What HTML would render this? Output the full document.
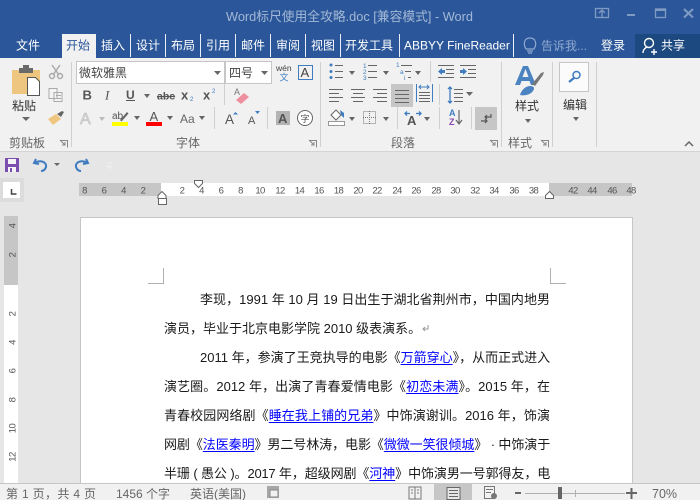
<!DOCTYPE html>
<html><head><meta charset="utf-8">
<style>
html,body{margin:0;padding:0;width:700px;height:500px;overflow:hidden;background:#e6e6e6}
svg{position:absolute;left:0;top:0}
svg text{font-family:"Liberation Sans","Noto Sans CJK SC",sans-serif}
.l{position:absolute;left:164px;width:386px;height:20px;line-height:20px;font-size:13px;color:#1a1a1a;white-space:nowrap;text-align:justify;text-align-last:justify;font-family:"Liberation Sans","Noto Sans CJK SC",sans-serif;overflow:visible}
.l a{color:#00f;text-decoration:underline;text-underline-offset:2px}
#doc{position:absolute;left:0;top:0;width:700px;height:483px;overflow:hidden}
</style></head><body>
<svg width="700" height="500" viewBox="0 0 700 500">
<rect width="700" height="500" fill="#e6e6e6"/>
<rect width="700" height="58" fill="#2b579a"/>
<rect y="58" width="700" height="93" fill="#f1f1f1"/>
<rect y="151" width="700" height="1" fill="#d4d4d4"/>
<!-- title -->
<text x="226" y="21" font-size="13" fill="#a3b8d6" textLength="247" lengthAdjust="spacingAndGlyphs">Word标尺使用全攻略.doc [兼容模式] - Word</text>
<g fill="none" stroke="#7f9bc3" stroke-width="1.300">
<rect x="595.500" y="8.500" width="13" height="9"/><path d="M599 13l3-3 3 3M602 10v7"/>
<path d="M627 15h8" stroke-width="2"/><rect x="655.500" y="9" width="10" height="8.500"/><path d="M655 10h11" stroke-width="2"/>
<path d="M684 9l9 8.500M693 9l-9 8.500" stroke-width="2"/></g>
<!-- tabs -->
<rect x="62" y="34" width="34" height="24" fill="#f1f1f1"/>
<rect x="635" y="34" width="65" height="24" fill="#1c4a80"/>
<g font-size="12" fill="#fff">
<text x="16" y="49.500">文件</text><text x="101" y="49.500">插入</text><text x="136" y="49.500">设计</text><text x="171" y="49.500">布局</text><text x="206" y="49.500">引用</text><text x="241" y="49.500">邮件</text><text x="276" y="49.500">审阅</text><text x="311" y="49.500">视图</text><text x="345" y="49.500">开发工具</text><text x="404" y="49.500">ABBYY FineReader</text><text x="601" y="49.500">登录</text><text x="661" y="49.500">共享</text>
</g>
<text x="66" y="49.500" font-size="12" fill="#2b579a">开始</text>
<text x="541" y="50" font-size="12" fill="#8fa9d0">告诉我...</text>
<g fill="#e8eef6"><rect x="130" y="34" width="1" height="23"/><rect x="165" y="34" width="1" height="23"/><rect x="200" y="34" width="1" height="23"/><rect x="235" y="34" width="1" height="23"/><rect x="270" y="34" width="1" height="23"/><rect x="305" y="34" width="1" height="23"/><rect x="340" y="34" width="1" height="23"/><rect x="399" y="34" width="1" height="23"/><rect x="513" y="34" width="1" height="23"/></g>
<path d="M526 49c-3-5-2-11 4-11s7 6 4 11zM527 51h6M528 53h4" fill="none" stroke="#8fa9d0" stroke-width="1.200"/>
<circle cx="649" cy="43" r="4.500" fill="none" stroke="#fff" stroke-width="1.400"/>
<path d="M643 53c0-3 2-5 4-6M651 52h6M654 49v6" fill="none" stroke="#fff" stroke-width="1.400"/>
<!-- ribbon separators -->
<g fill="#d0d0d0"><rect x="71" y="62" width="1" height="85"/><rect x="320" y="62" width="1" height="85"/><rect x="501" y="62" width="1" height="85"/><rect x="552" y="62" width="1" height="85"/><rect x="596" y="62" width="1" height="85"/><rect x="224" y="84" width="1" height="21"/><rect x="214" y="107" width="1" height="22"/><rect x="267" y="107" width="1" height="22"/><rect x="430" y="61" width="1" height="21"/><rect x="439" y="84" width="1" height="21"/><rect x="397" y="107" width="1" height="22"/><rect x="439" y="107" width="1" height="22"/><rect x="471" y="107" width="1" height="22"/></g>
<!-- clipboard -->
<path d="M12 70h28v24H12z" fill="#efc67f"/><rect x="19" y="68" width="14" height="5" fill="#6a6a6a"/><rect x="23" y="65" width="6" height="4" fill="#6a6a6a"/>
<path d="M27.500 77.500h8l4 4v14h-12z" fill="#fff" stroke="#555"/>
<text x="12" y="110" font-size="12" fill="#333">粘贴</text>
<path d="M22 117h8l-4 4z" fill="#666"/>
<!-- cut / copy / painter -->
<g fill="none" stroke="#aaa" stroke-width="1.500"><path d="M52 65l7 10M60 65l-7 10"/><circle cx="52" cy="76" r="2.500"/><circle cx="60" cy="76" r="2.500"/>
<path d="M49 88.500h8v10h-8zM54 92.500h8v9h-8zM56 95.500h5M56 98.500h5" stroke-width="1" fill="#f4f4f4"/></g>
<path d="M48 119l8-5 5 5-8 6z" fill="#efc67f"/><path d="M57 114l5-3 2 1-3 5z" fill="#666"/>
<text x="9" y="147" font-size="12" fill="#666">剪贴板</text>
<path d="M60.500 140.500h7v7M60 140l5 5M65 142v3h-3" fill="none" stroke="#888"/>
<!-- font boxes -->
<rect x="76.500" y="61.500" width="148" height="22" fill="#fff" stroke="#c6c6c6"/>
<rect x="225.500" y="61.500" width="46" height="22" fill="#fff" stroke="#c6c6c6"/>
<text x="79" y="77" font-size="12" fill="#444">微软雅黑</text>
<text x="229" y="77" font-size="12" fill="#444">四号</text>
<g fill="#666"><path d="M214 71h7l-3.500 4zM261 71h7l-3.500 4zM144 94h6l-3 4zM134 116h6l-3 4zM167 116h6l-3 4zM199 116h6l-3 4z"/></g>
<text x="276" y="71" font-size="8.500" fill="#444">wén</text><text x="279.500" y="80.500" font-size="9" fill="#3f7cc0">文</text>
<rect x="298.500" y="65.500" width="14" height="14" fill="none" stroke="#3f7cc0"/><text x="300.500" y="77" font-size="13" fill="#444">A</text>
<g fill="#555">
<text x="82.500" y="99.500" font-size="13" font-weight="bold">B</text><text x="105" y="99.500" font-size="13" font-style="italic" style="font-family:'Liberation Serif'">I</text>
<text x="126" y="99" font-size="12" font-weight="bold">U</text><rect x="126" y="100" width="9" height="1"/>
<text x="157" y="99.500" font-size="10.500" font-weight="bold" text-decoration="line-through">abc</text>
<text x="181" y="99.500" font-size="13" font-weight="bold">x</text><text x="203" y="99.500" font-size="13" font-weight="bold">x</text>
</g>
<text x="190" y="101" font-size="6" fill="#3f7cc0">2</text><text x="212" y="93" font-size="6" fill="#3f7cc0">2</text>
<text x="234" y="95" font-size="9" fill="#777">A</text><path d="M236 100l8-7 5 4-8 7z" fill="#ee8fa0"/>
<!-- font row3 -->
<text x="80" y="124" font-size="16" fill="#ddd" stroke="#bbb" stroke-width=".6">A</text><path d="M99 117h6l-3 4z" fill="#bbb"/>
<text x="112" y="119" font-size="10" fill="#555">ab</text><path d="M120 120l7-8 1.500 1.500-7 8z" fill="#666"/><rect x="112" y="122" width="16" height="4" fill="#ff0"/>
<text x="149.500" y="121" font-size="13" fill="#555">A</text><rect x="146" y="122" width="16" height="4" fill="#f00"/>
<text x="180" y="123" font-size="12" fill="#666">Aa</text>
<text x="225" y="124" font-size="13.500" fill="#555">A</text><path d="M233 114.500l2.500-2.500 2.500 2.500z" fill="#3f7cc0"/>
<text x="248" y="124" font-size="11" fill="#555">A</text><path d="M255 111h5l-2.500 3z" fill="#3f7cc0"/>
<rect x="276" y="111" width="14" height="14" fill="#b3b3b3"/><text x="278" y="123" font-size="13" font-weight="bold" fill="#555">A</text>
<circle cx="305" cy="118" r="7.500" fill="#fff" stroke="#666"/><text x="300.500" y="122" font-size="9" fill="#555">字</text>
<text x="176" y="147" font-size="12" fill="#666">字体</text>
<path d="M309.500 140.500h7v7M309 140l5 5M314 142v3h-3" fill="none" stroke="#888"/>
<!-- paragraph row1 -->
<g fill="#3f7cc0"><circle cx="331" cy="65" r="1.500"/><circle cx="331" cy="71.500" r="1.500"/><circle cx="331" cy="77.500" r="1.500"/></g>
<g stroke="#666" stroke-width="1" fill="none">
<path d="M335 65.500h8M335 71.500h8M335 77.500h8M368 65.500h9M368 71.500h9M368 77.500h9M401 65.500h11M405 71.500h6M408 77.500h3"/>
<path d="M438 65.500h16M446 69.500h8M446 73.500h8M438 77.500h16M460 65.500h16M468 69.500h8M468 73.500h8M460 77.500h16"/>
<path d="M329 89.500h14M329 93.500h10M329 97.500h14M329 101.500h10M351 89.500h14M353 93.500h10M351 97.500h14M353 101.500h10M373 89.500h14M377 93.500h10M373 97.500h14M377 101.500h10"/>
</g>
<g font-size="6.500" fill="#3f7cc0"><text x="363" y="68">1</text><text x="363" y="74">2</text><text x="363" y="80">3</text><text x="396" y="67">1</text><text x="400" y="74">a</text><text x="404" y="80">i</text></g>
<g fill="#3f7cc0"><path d="M438 71.500l4-3.500v2h3v3h-3v2zM467 71.500l-4-3.500v2h-3v3h3v2z"/></g>
<rect x="391" y="84" width="22" height="23" fill="#c6c6c6"/>
<g stroke="#666" fill="none"><path d="M395 90.500h14M395 94.500h14M395 98.500h14M395 102.500h14"/></g>
<path d="M416.500 84v18M432.500 84v18" stroke="#3f7cc0" fill="none"/>
<path d="M419 87h10M421 85l-2 2 2 2M427 85l2 2-2 2" stroke="#3f7cc0" fill="none"/>
<g stroke="#666" fill="none"><path d="M419 92.500h11M419 95.500h11M419 98.500h11M419 101.500h11"/></g>
<path d="M450 87v16M448 89l2-2 2 2M448 101l2 2 2-2" stroke="#3f7cc0" fill="none" stroke-width="1.300"/>
<path d="M454 89.500h9M454 93.500h9M454 97.500h9M454 101.500h9" stroke="#666" fill="none"/>
<g fill="#666"><path d="M466 92h7l-3.500 4zM349 71h6l-3 4zM383 71h6l-3 4zM415 71h6l-3 4zM349 117h6l-3 4zM383 117h6l-3 4zM424 117h6l-3 4z"/></g>
<rect x="328.500" y="121.500" width="16" height="4" fill="#fff" stroke="#999"/><path d="M331 115l5-5 5 5-5 5z" fill="#fff" stroke="#666"/><path d="M340 110l4 3v5l-3-3z" fill="#3f7cc0"/>
<rect x="363.500" y="111.500" width="12" height="12" fill="none" stroke="#777" stroke-dasharray="1 1"/><path d="M369.500 111v13M363 117.500h13" stroke="#777" stroke-dasharray="1 1"/>
<path d="M405 113.500h5M416 113.500h5M407 111.500l-2 2 2 2M419 111.500l2 2-2 2" stroke="#3f7cc0" fill="none" stroke-width="1.300"/>
<text x="407" y="125" font-size="13" font-weight="bold" fill="#555">A</text>
<text x="449" y="116" font-size="9" font-weight="bold" fill="#3f7cc0">A</text><text x="449" y="125" font-size="9" font-weight="bold" fill="#8a49b0">Z</text>
<path d="M459 110v14M456 120l3 4 3-4" stroke="#666" fill="none" stroke-width="1.200"/>
<rect x="475" y="107" width="22" height="23" fill="#c6c6c6"/>
<path d="M491 114v3h-6M487 115l-2 2 2 2M481 121h6M485 119l2 2-2 2" stroke="#555" fill="none" stroke-width="1.200"/>
<text x="391" y="147" font-size="12" fill="#666">段落</text>
<path d="M490.500 140.500h7v7M490 140l5 5M495 142v3h-3" fill="none" stroke="#888"/>
<!-- styles -->
<path d="M523 66h5l8 19h-5l-1.500-4h-8l-1.500 4h-5z" fill="#4a83c0"/><path d="M522.500 77h6l-3-8z" fill="#f1f1f1"/>
<path d="M532 84l9-11 3-1-1 3-8 11z" fill="#777"/><path d="M520 95c1-4 5-9 10-9 4 0 5 2 3 5-3 4-9 5-13 4z" fill="#4a83c0"/>
<text x="515" y="110" font-size="12" fill="#333">样式</text>
<path d="M525 119h6l-3 4z" fill="#666"/>
<text x="508" y="147" font-size="12" fill="#666">样式</text>
<path d="M541.500 140.500h7v7M541 140l5 5M546 142v3h-3" fill="none" stroke="#888"/>
<!-- edit -->
<rect x="559.500" y="62.500" width="29" height="29" fill="#fbfbfb" stroke="#c6c6c6"/>
<circle cx="576.500" cy="75" r="3.500" fill="none" stroke="#3f7cc0" stroke-width="1.500"/><path d="M574 78l-5 4" stroke="#3f7cc0" stroke-width="2.200"/>
<text x="563" y="109" font-size="12" fill="#333">编辑</text>
<path d="M573 117h6l-3 4z" fill="#666"/>
<path d="M685 146l4-4 4 4" fill="none" stroke="#666" stroke-width="1.500"/>
<!-- qat -->
<rect x="5" y="158" width="14" height="14" fill="#7a4fb0"/><rect x="8" y="159" width="8" height="5" fill="#f4f4f4"/><rect x="8" y="167" width="8" height="5" fill="#f4f4f4"/><rect x="10" y="168" width="2" height="4" fill="#7a4fb0"/>
<path d="M36 159l-2 4 5 1M35 163c4-3 12-2 11 4-1 3-3 4-5 4" fill="none" stroke="#3f7cc0" stroke-width="2"/>
<path d="M54 163h6l-3 3z" fill="#666"/>
<path d="M86 159l2 4-5 1M87 163c-4-3-12-2-11 4 1 3 3 4 5 4" fill="none" stroke="#3f7cc0" stroke-width="2"/>
<path d="M107 163h5M107 166h5l-2.500 3z" fill="#eee" stroke="#eee"/>
<!-- ruler corner -->
<rect x="0" y="178" width="24" height="24" fill="#dcdcdc"/><rect x="3" y="182" width="17" height="16" fill="#fff"/>
<path d="M11.500 189v5h5" fill="none" stroke="#444" stroke-width="1.500"/>
<!-- h ruler -->
<rect x="79" y="183" width="82" height="13" fill="#c6c6c6"/><rect x="161" y="183" width="388" height="13" fill="#fff"/><rect x="549" y="183" width="83" height="13" fill="#c6c6c6"/>
<g font-size="9.500" fill="#555" text-anchor="middle" letter-spacing="-.6">
<text x="84.500" y="193.500">8</text><text x="104" y="193.500">6</text><text x="123.500" y="193.500">4</text><text x="143" y="193.500">2</text>
<text x="182" y="193.500">2</text><text x="201.500" y="193.500">4</text><text x="221" y="193.500">6</text><text x="240.500" y="193.500">8</text><text x="260" y="193.500">10</text><text x="280" y="193.500">12</text><text x="299.500" y="193.500">14</text><text x="319" y="193.500">16</text><text x="338.500" y="193.500">18</text><text x="358" y="193.500">20</text><text x="377" y="193.500">22</text><text x="397" y="193.500">24</text><text x="416" y="193.500">26</text><text x="436" y="193.500">28</text><text x="455" y="193.500">30</text><text x="475" y="193.500">32</text><text x="494" y="193.500">34</text><text x="514" y="193.500">36</text><text x="533.500" y="193.500">38</text><text x="573" y="193.500">42</text><text x="592" y="193.500">44</text><text x="612" y="193.500">46</text><text x="631" y="193.500">48</text>
</g>
<path d="M194.500 180.500h8v3l-4 4-4-4z" fill="#fff" stroke="#666"/>
<path d="M162 191.500l4 4v3h-8v-3z" fill="#fff" stroke="#666"/><rect x="158.500" y="198.500" width="8" height="6" fill="#fff" stroke="#666"/>
<path d="M549.500 191.500l4 4v3h-8v-3z" fill="#fff" stroke="#666"/>
<!-- v ruler -->
<rect x="4" y="216" width="14" height="69" fill="#c6c6c6"/><rect x="4" y="285" width="14" height="198" fill="#fff"/>
<g font-size="9.500" fill="#555" text-anchor="middle" letter-spacing="-.6">
<text transform="translate(15.500 226) rotate(-90)">4</text><text transform="translate(15.500 255) rotate(-90)">2</text><text transform="translate(15.500 314) rotate(-90)">2</text><text transform="translate(15.500 342.500) rotate(-90)">4</text><text transform="translate(15.500 371) rotate(-90)">6</text><text transform="translate(15.500 400) rotate(-90)">8</text><text transform="translate(15.500 428.500) rotate(-90)">10</text><text transform="translate(15.500 457) rotate(-90)">12</text>
</g>
<!-- page -->
<rect x="80.500" y="217.500" width="552" height="280" fill="#fff" stroke="#c6c6c6"/>
<path d="M148 283.500h15.500V268M550.500 268v15.500H566" fill="none" stroke="#b0b0b0"/>
<path d="M428 325v4h-5M425 327l-2 2 2 2" stroke="#999" fill="none"/>
</svg>
<div id="doc">
<div class="l" style="left:200px;width:350px;top:290px">李现，1991 年 10 月 19 日出生于湖北省荆州市，中国内地男</div>
<div class="l" style="top:319px;width:252px">演员，毕业于北京电影学院 2010 级表演系。</div>
<div class="l" style="left:200px;width:350px;top:348px">2011 年，参演了王竞执导的电影《<a>万箭穿心</a>》，从而正式进入</div>
<div class="l" style="top:377px">演艺圈。2012 年，出演了青春爱情电影《<a>初恋未满</a>》。2015 年，在</div>
<div class="l" style="top:406px">青春校园网络剧《<a>睡在我上铺的兄弟</a>》中饰演谢训。2016 年，饰演</div>
<div class="l" style="top:435px;letter-spacing:-.25px">网剧《<a>法医秦明</a>》男二号林涛，电影《<a>微微一笑很倾城</a>》 · 中饰演于</div>
<div class="l" style="top:464px;letter-spacing:-.25px">半珊 ( 愚公 )。2017 年，超级网剧《<a>河神</a>》中饰演男一号郭得友，电</div>
</div>
<svg width="700" height="500" viewBox="0 0 700 500" style="pointer-events:none">
<rect y="483" width="700" height="17" fill="#f1f1f1"/><rect y="483" width="700" height="1" fill="#c6c6c6"/>
<g font-size="12" fill="#666"><text x="6" y="498" textLength="90">第 1 页，共 4 页</text><text x="116" y="498">1456 个字</text><text x="190" y="498">英语(美国)</text><text x="652" y="498" font-size="12.500">70%</text></g>
<rect x="267" y="486" width="12" height="12" fill="#777" opacity=".6"/><rect x="270" y="490" width="8" height="7" fill="#f1f1f1" stroke="#888"/>
<rect x="434" y="484" width="38" height="16" fill="#c6c6c6"/>
<path d="M409 487h12v12h-12zM415 487v12M411 490h2M411 493h2M417 490h2M417 493h2" fill="#f1f1f1" stroke="#777"/>
<path d="M447 487.500h13v12h-13zM449 490.500h9M449 493.500h9M449 496.500h9" fill="#e6e6e6" stroke="#666"/>
<path d="M484.500 486.500h10v12h-10zM486 489.500h7M486 492.500h5" fill="#f1f1f1" stroke="#777"/><circle cx="494" cy="496" r="3" fill="#777"/>
<rect x="515" y="492" width="6" height="2" fill="#666"/>
<rect x="525" y="493" width="100" height="1" fill="#b0b0b0"/><rect x="575" y="490" width="1" height="7" fill="#b0b0b0"/>
<rect x="558" y="487" width="4" height="12" fill="#666"/>
<path d="M626 493h11M631.500 488v11" stroke="#666" stroke-width="2" fill="none"/>
</svg>
</body></html>
